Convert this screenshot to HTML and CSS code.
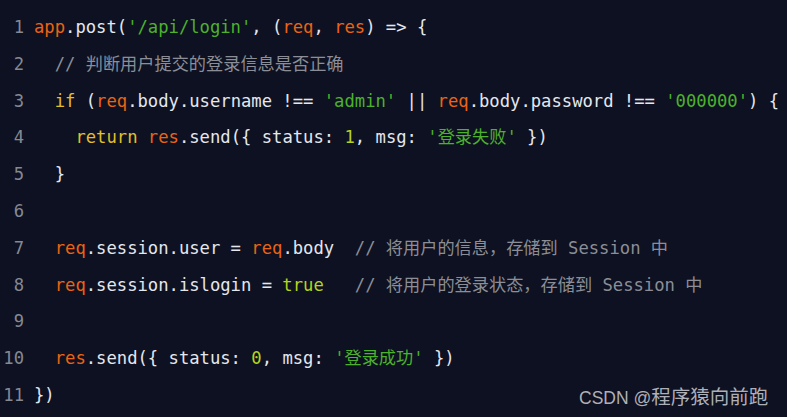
FILE: index.html
```html
<!DOCTYPE html>
<html lang="zh-CN">
<head>
<meta charset="utf-8">
<title>login code</title>
<link rel="stylesheet" href="styles.css">
</head>
<body>
<div class="editor">
  <div class="line"><span class="num">1</span><span class="code"><span class="obj">app</span>.post(<span class="str">'/api/login'</span>, (<span class="obj">req</span>, <span class="obj">res</span>) =&gt; {</span></div>
  <div class="line"><span class="num">2</span><span class="code">  <span class="cmt">// 判断用户提交的登录信息是否正确</span></span></div>
  <div class="line"><span class="num">3</span><span class="code">  <span class="kw">if</span> (<span class="obj">req</span>.body.username !== <span class="str">'admin'</span> || <span class="obj">req</span>.body.password !== <span class="str">'000000'</span>) {</span></div>
  <div class="line"><span class="num">4</span><span class="code">    <span class="kw">return</span> <span class="obj">res</span>.send({ status: <span class="lit">1</span>, msg: <span class="str">'登录失败'</span> })</span></div>
  <div class="line"><span class="num">5</span><span class="code">  }</span></div>
  <div class="line"><span class="num">6</span><span class="code"> </span></div>
  <div class="line"><span class="num">7</span><span class="code">  <span class="obj">req</span>.session.user = <span class="obj">req</span>.body  <span class="cmt">// 将用户的信息，存储到 Session 中</span></span></div>
  <div class="line"><span class="num">8</span><span class="code">  <span class="obj">req</span>.session.islogin = <span class="lit">true</span>   <span class="cmt">// 将用户的登录状态，存储到 Session 中</span></span></div>
  <div class="line"><span class="num">9</span><span class="code"> </span></div>
  <div class="line"><span class="num">10</span><span class="code">  <span class="obj">res</span>.send({ status: <span class="lit">0</span>, msg: <span class="str">'登录成功'</span> })</span></div>
  <div class="line"><span class="num">11</span><span class="code">})</span></div>
  <div class="watermark">CSDN @<span class="wm-cjk">程序猿向前跑</span></div>
</div>
</body>
</html>
```
FILE: styles.css
```css
html, body {
  margin: 0;
  padding: 0;
  background: #0e1121;
  height: 100%;
  overflow: hidden;
}
.editor {
  position: relative;
  height: 417px;
  padding-top: 9px;
  box-sizing: border-box;
  font-family: "DejaVu Sans Mono", "Noto Sans CJK SC", monospace;
  font-size: 17.2px;
  color: #e4e7ee;
}
.line {
  display: flex;
  height: 36.8px;
  line-height: 36.8px;
  white-space: pre;
}
.num {
  width: 24px;
  text-align: right;
  color: #858993;
  flex: none;
}
.code {
  margin-left: 10px;
}
.obj { color: #ea6412; }
.str { color: #4cb22c; }
.kw { color: #e3bf2a; }
.lit { color: #b6d320; }
.cmt { color: #8b8e97; }
.watermark {
  position: absolute;
  left: 579px;
  top: 385px;
  font-family: "Liberation Sans", "Noto Sans CJK SC", sans-serif;
  font-size: 17.5px;
  line-height: 24px;
  color: #aeb0b8;
  white-space: nowrap;
}
.wm-cjk {
  font-size: 19.5px;
}
```
